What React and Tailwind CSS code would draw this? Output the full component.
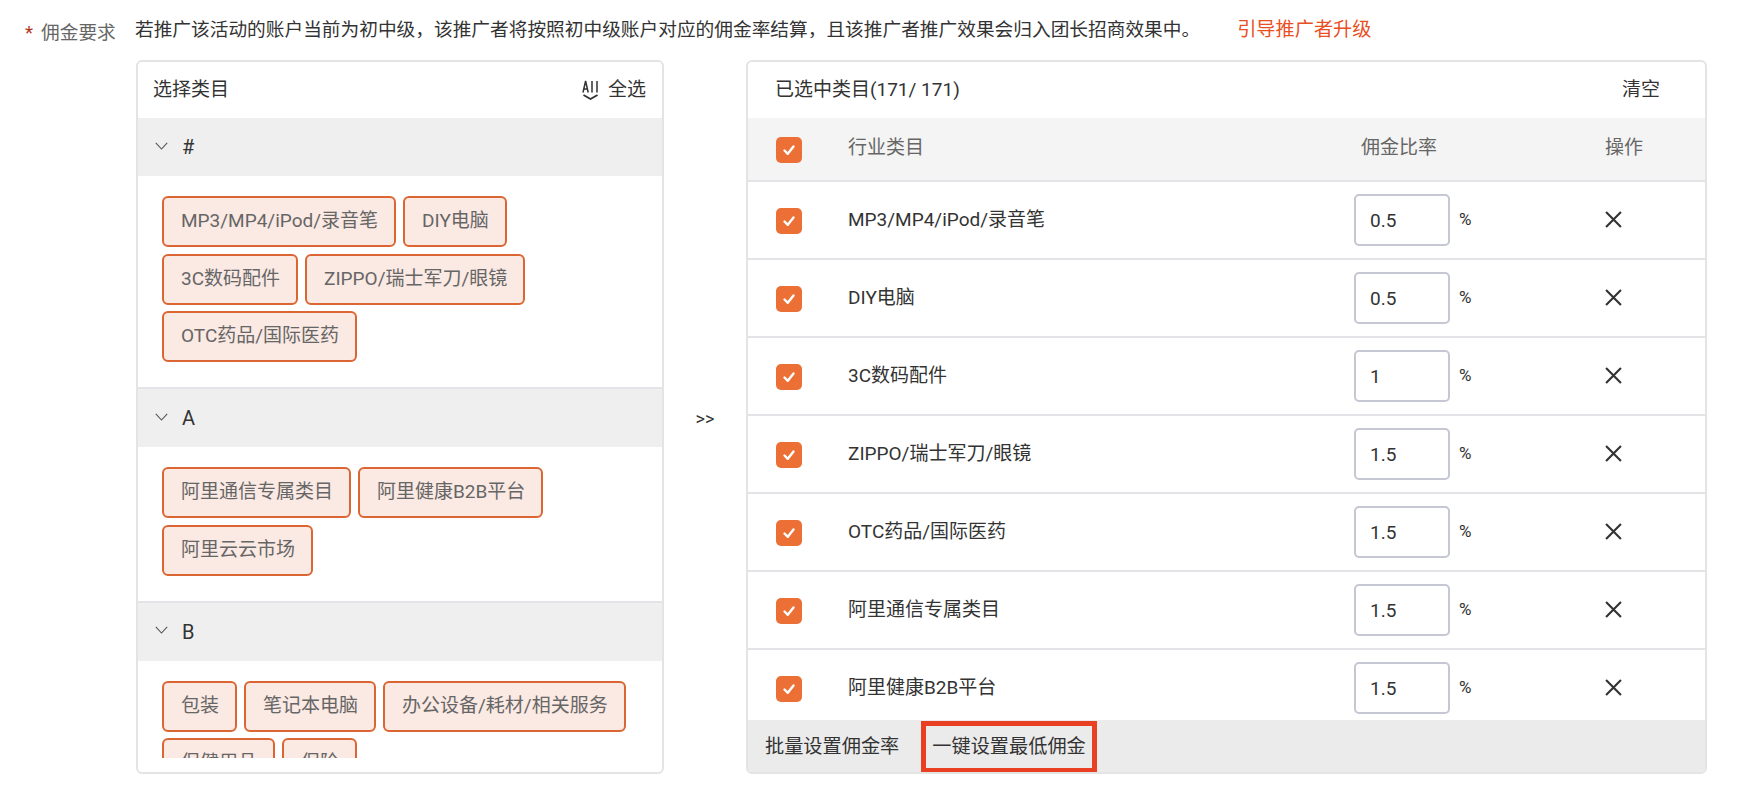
import React from "react";

const FONT = "font-['Roboto','Noto_Sans_CJK_SC',sans-serif]";

// Left column data
const sections = [
  {
    letter: "#",
    tags: ["MP3/MP4/iPod/录音笔", "DIY电脑", "3C数码配件", "ZIPPO/瑞士军刀/眼镜", "OTC药品/国际医药"],
    maxW: "max-w-[430px]",
  },
  {
    letter: "A",
    tags: ["阿里通信专属类目", "阿里健康B2B平台", "阿里云云市场"],
    maxW: "max-w-[430px]",
  },
  {
    letter: "B",
    tags: ["包装", "笔记本电脑", "办公设备/耗材/相关服务", "保健用品", "保险"],
    maxW: "max-w-[510px]",
  },
];

// Right column data
const rows = [
  { name: "MP3/MP4/iPod/录音笔", rate: "0.5" },
  { name: "DIY电脑", rate: "0.5" },
  { name: "3C数码配件", rate: "1" },
  { name: "ZIPPO/瑞士军刀/眼镜", rate: "1.5" },
  { name: "OTC药品/国际医药", rate: "1.5" },
  { name: "阿里通信专属类目", rate: "1.5" },
  { name: "阿里健康B2B平台", rate: "1.5" },
];

const Checkbox = () => (
  <span className="mt-[2px] flex h-[26px] w-[26px] shrink-0 items-center justify-center rounded-[5px] bg-[#ec6f36]">
    <svg viewBox="0 0 16 16" className="h-[16px] w-[16px]" fill="none" stroke="#fff" strokeWidth="2.4" strokeLinecap="round" strokeLinejoin="round">
      <path d="M3.5 8.5 L6.8 11.8 L12.5 4.5" />
    </svg>
  </span>
);

const Chevron = () => (
  <svg viewBox="0 0 13 8" className="mb-[3px] h-[8px] w-[13px]" fill="none" stroke="#555" strokeWidth="1.1">
    <path d="M0.8 0.8 L6.5 7 L12.2 0.8" />
  </svg>
);

const AllIcon = () => (
  <svg viewBox="0 0 17 20" className="h-[20px] w-[17px]" fill="none" stroke="#333" strokeWidth="1.5">
    <path d="M1 12.5 L3.6 1 L6.2 12.5 M1.8 9 H5.4 M10 1 V12.5 M15 1 V12.5" />
    <path d="M1.5 15 L8.5 19 L15.5 15" strokeWidth="1.8" />
  </svg>
);

const CloseIcon = () => (
  <svg viewBox="0 0 16 16" className="mb-[2px] h-[17px] w-[17px]" fill="none" stroke="#333" strokeWidth="2">
    <path d="M1 1 L15 15 M15 1 L1 15" />
  </svg>
);

const Section = ({ letter, tags, maxW }) => (
  <div className="border-b-2 border-[#e3e3e8]">
    <div className="flex h-[58px] items-center gap-[14px] bg-[#efefef] pl-[17px] text-[20px] text-[#333]">
      <Chevron />
      <span>{letter}</span>
    </div>
    <div className={`flex flex-wrap gap-x-[7px] gap-y-[6.5px] pt-[20px] pb-[25px] pl-[24px] ${maxW}`}>
      {tags.map((tag) => (
        <span
          key={tag}
          className="flex h-[51px] items-center rounded-[6px] border-2 border-[#dc6633] bg-[#fbe9e3] pr-[16px] pl-[17px] text-[19px] text-[#666]"
        >
          {tag}
        </span>
      ))}
    </div>
  </div>
);

const App = () => {
  return (
    <div className={`h-[800px] w-[1752px] overflow-hidden bg-white ${FONT}`}>
      {/* Top line */}
      <div className="flex h-[60px] items-start">
        <div className="flex w-[135px] items-center pt-[20px] pl-[25px] text-[18.7px] leading-[26px] text-[#666]">
          <span className="mr-[8px] text-[#b3361f]">*</span>
          佣金要求
        </div>
        <p className="pt-[17px] text-[18.7px] leading-[26px] text-[#333]">
          若推广该活动的账户当前为初中级，该推广者将按照初中级账户对应的佣金率结算，且该推广者推广效果会归入团长招商效果中。
          <span className="ml-[37px] text-[19.2px] text-[#e9501f]">引导推广者升级</span>
        </p>
      </div>

      <div className="flex pl-[136px]">
        {/* Category picker */}
        <div className="flex h-[714px] w-[528px] flex-col overflow-hidden rounded-[6px] border-2 border-[#e4e4e4]">
          <div className="flex h-[56px] shrink-0 items-center justify-between pr-[16px] pl-[15px] text-[19px] text-[#333]">
            <span>选择类目</span>
            <span className="flex items-center gap-[9px]">
              <AllIcon />
              全选
            </span>
          </div>
          <div className="h-[640px] shrink-0 overflow-hidden">
            {sections.map((s) => (
              <Section key={s.letter} {...s} />
            ))}
          </div>
        </div>

        {/* Arrow */}
        <div className="flex h-[714px] w-[82px] items-center justify-center pt-[2px] text-[18px] text-[#333]">
          &gt;&gt;
        </div>

        {/* Selected table */}
        <div className="flex h-[714px] w-[961px] flex-col overflow-hidden rounded-[6px] border-2 border-[#e4e4e4]">
          <div className="flex h-[56px] shrink-0 items-center justify-between pr-[45px] pl-[27px] text-[19px] text-[#333]">
            <span>已选中类目(171/ 171)</span>
            <span>清空</span>
          </div>
          <div className="flex h-[64px] shrink-0 items-center border-b-2 border-[#e3e3e8] bg-[#f4f4f4] pl-[28px] text-[19px] text-[#666]">
            <Checkbox />
            <span className="ml-[46px] mb-[2px] w-[513px]">行业类目</span>
            <span className="mb-[2px] w-[244px]">佣金比率</span>
            <span className="mb-[2px]">操作</span>
          </div>
          <div className="h-[538px] shrink-0 overflow-hidden">
            {rows.map((row) => (
              <div key={row.name} className="flex h-[78px] items-center border-b-2 border-[#e3e3e8] pl-[28px] text-[19px] text-[#333]">
                <Checkbox />
                <span className="ml-[46px] w-[506px]">{row.name}</span>
                <span className="flex h-[52px] w-[96px] items-center rounded-[5px] border-2 border-[#c5c7d3] pt-[2px] pl-[14px]">
                  {row.rate}
                </span>
                <span className="ml-[9px] w-[146px] text-[17px]">%</span>
                <CloseIcon />
              </div>
            ))}
          </div>
          <div className="flex h-[54px] shrink-0 items-center bg-[#ebebeb] pl-[17px] text-[19.2px] text-[#333]">
            <span>批量设置佣金率</span>
            <span className="ml-[22px] flex h-[52px] items-center border-[5px] border-[#e93f23] px-[6px]">
              一键设置最低佣金
            </span>
          </div>
        </div>
      </div>
    </div>
  );
};

export default App;
